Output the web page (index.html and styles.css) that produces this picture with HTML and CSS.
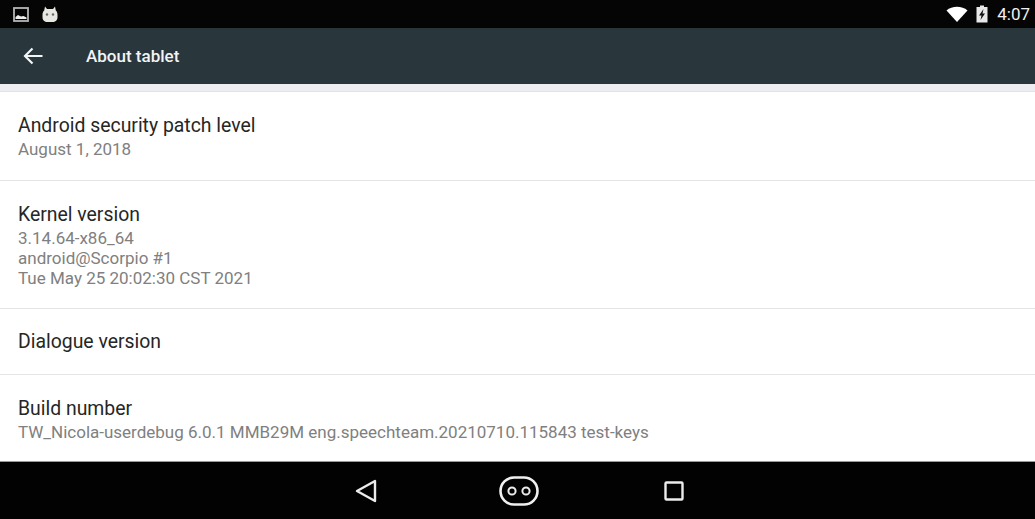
FILE: index.html
```html
<!DOCTYPE html>
<html lang="en">
<head>
  <meta charset="UTF-8" />
  <meta name="viewport" content="width=device-width, initial-scale=1.0" />
  <title>About tablet</title>
  <link rel="stylesheet" href="styles.css">
</head>
<body>

  <div class="status-bar">
    <div class="status-left">
      <svg class="icon-picture" width="16" height="15" viewBox="0 0 16 15">
        <rect x="1" y="1" width="14" height="13" fill="none" stroke="#b5b5b5" stroke-width="1.8"/>
        <path d="M2.5 12 V10 L5 8 L8 9.5 L10.5 9 L13.5 10.5 V12 Z" fill="#eee"/>
      </svg>
      <svg class="icon-bot" width="16" height="17" viewBox="0 0 16 17">
        <path d="M3 0.5 L5 3 H11 L13 0.5 L13.8 4.5 C15 5.5 15.5 7 15.5 9 V11 C15.5 14.5 13.5 16 10.5 16 H5.5 C2.5 16 0.5 14.5 0.5 11 V9 C0.5 7 1 5.5 2.2 4.5 Z" fill="#e8e6e0"/>
        <circle cx="5" cy="8.5" r="1.2" fill="#666"/>
        <circle cx="11" cy="8.5" r="1.2" fill="#666"/>
      </svg>
    </div>
    <div class="status-right">
      <svg class="icon-wifi" width="22" height="16" viewBox="0 0 22 16">
        <path d="M0.5 4.5 C6 -0.5 16 -0.5 21.5 4.5 L11 16 Z" fill="#fff"/>
      </svg>
      <svg class="icon-battery" width="12" height="18" viewBox="0 0 12 18">
        <path d="M4 0.5 H8 V2 H11.5 V17.5 H0.5 V2 H4 Z" fill="#e8e8e8"/>
        <path d="M7.5 4 L3 10.5 H5.5 L4.5 15 L9 8.5 H6.5 Z" fill="#111"/>
      </svg>
      <span class="clock">4:07</span>
    </div>
  </div>

  <div class="app-bar">
    <svg class="icon-back" width="20" height="18" viewBox="0 0 20 18">
      <path d="M19.5 9 H2 M9.5 1.5 L2 9 L9.5 16.5" fill="none" stroke="#f2f4f5" stroke-width="2.2"/>
    </svg>
    <h1 class="app-title">About tablet</h1>
  </div>

  <div class="settings-list">
    <div class="top-strip"></div>

    <div class="row row-patch">
      <div class="row-title">Android security patch level</div>
      <div class="row-sub">August 1, 2018</div>
    </div>

    <div class="row row-kernel">
      <div class="row-title">Kernel version</div>
      <div class="row-sub">3.14.64-x86_64<br>android@Scorpio #1<br>Tue May 25 20:02:30 CST 2021</div>
    </div>

    <div class="row row-dialogue">
      <div class="row-title">Dialogue version</div>
    </div>

    <div class="row row-build">
      <div class="row-title">Build number</div>
      <div class="row-sub">TW_Nicola-userdebug 6.0.1 MMB29M eng.speechteam.20210710.115843 test-keys</div>
    </div>
  </div>

  <div class="nav-bar">
    <svg width="22" height="24" viewBox="0 0 22 24">
      <path d="M20 2 V22 L2 12 Z" fill="none" stroke="#ececec" stroke-width="2.4" stroke-linejoin="round"/>
    </svg>
    <svg width="40" height="30" viewBox="0 0 40 30">
      <rect x="1.5" y="1.5" width="37" height="27" rx="13.5" fill="none" stroke="#f0f0f0" stroke-width="2.6"/>
      <circle cx="13" cy="15" r="3.6" fill="none" stroke="#ececec" stroke-width="2"/>
      <circle cx="27" cy="15" r="3.6" fill="none" stroke="#ececec" stroke-width="2"/>
    </svg>
    <svg width="20" height="20" viewBox="0 0 20 20">
      <rect x="1.5" y="1.5" width="17" height="17" rx="1" fill="none" stroke="#ececec" stroke-width="2.4"/>
    </svg>
  </div>

</body>
</html>
```

FILE: styles.css
```css
body, html {
  margin: 0;
  padding: 0;
  height: 100%;
  font-family: 'Roboto', 'Liberation Sans', sans-serif;
  overflow: hidden;
  background: #fff;
}

.status-bar {
  height: 28px;
  background: #050505;
  display: flex;
  justify-content: space-between;
  align-items: center;
  padding: 0 5px 0 13px;
}

.status-left, .status-right {
  display: flex;
  align-items: center;
}

.status-left {
  gap: 13px;
}

.status-right {
  color: #f0f0f0;
}

.icon-wifi {
  margin-right: 8px;
}

.clock {
  font-size: 17px;
  margin-left: 9px;
}

.app-bar {
  height: 56px;
  background: #29363c;
  display: flex;
  align-items: center;
  padding-left: 23px;
  box-sizing: border-box;
}

.app-title {
  margin: 0 0 0 43px;
  font-size: 17px;
  font-weight: 500;
  color: #f2f4f5;
}

.settings-list {
  height: 377px;
  color: #222;
}

.top-strip {
  height: 8px;
  background: #eeeef2;
  border-bottom: 1px solid #e2e2e2;
  box-sizing: border-box;
}

.row {
  padding-left: 18px;
  padding-top: 1px;
  border-bottom: 1px solid #e4e4e4;
  box-sizing: border-box;
  display: flex;
  flex-direction: column;
  justify-content: center;
}

.row-patch { height: 89px; }
.row-kernel { height: 128px; }
.row-dialogue { height: 66px; }
.row-build { height: 86px; padding-top: 3px; border-bottom: none; }

.row-title {
  font-size: 19.4px;
  line-height: 24px;
  color: #262626;
}

.row-sub {
  font-size: 17px;
  line-height: 20px;
  margin-top: 1px;
  color: #808080;
}

.nav-bar {
  height: 58px;
  background: #020202;
  border-top: 1px solid #999;
  box-sizing: border-box;
  display: flex;
  justify-content: center;
  align-items: center;
  gap: 0;
  padding-left: 3px;
}

.nav-bar svg:nth-child(1) { margin-right: 122px; }
.nav-bar svg:nth-child(3) { margin-left: 125px; }
```
